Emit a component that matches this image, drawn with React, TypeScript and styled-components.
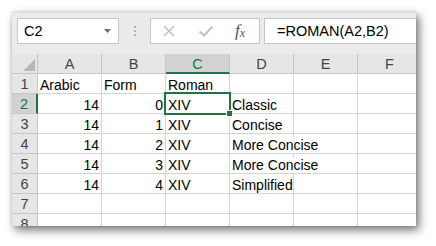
import React from "react";
import styled, { createGlobalStyle, css } from "styled-components";

const GREEN = "#217346";

const GlobalStyle = createGlobalStyle`
    html, body {
        margin: 0;
        padding: 0;
        background: #ffffff;
    }
    body {
        font-family: "Liberation Sans", Arial, sans-serif;
        font-size: 14px;
        color: #000;
    }
`;

const Page = styled.div`
    padding: 12px;
    width: 436px;
    height: 246px;
    box-sizing: border-box;
    overflow: hidden;
`;

const Window = styled.div`
    width: 404px;
    height: 214px;
    overflow: hidden;
    background: #ffffff;
    box-shadow: 3px 4px 9px rgba(0, 0, 0, 0.55), 0 0 3px rgba(0, 0, 0, 0.12);
    display: flex;
    flex-direction: column;
`;

const Toolbar = styled.div`
    height: 42px;
    flex: none;
    background: #ebebeb;
    border-top: 1px solid #dcdcdc;
    box-sizing: border-box;
    display: flex;
    align-items: flex-start;
    padding: 5px 0 0 5px;
`;

const NameBox = styled.div`
    width: 102px;
    height: 26px;
    box-sizing: border-box;
    background: #fff;
    border: 1px solid #c6c6c6;
    display: flex;
    align-items: center;
    justify-content: space-between;
    padding: 0 7px 0 6px;
    font-size: 14.5px;
`;

const Dots = styled.div`
    width: 31px;
    height: 26px;
    display: flex;
    flex-direction: column;
    align-items: center;
    justify-content: center;
    gap: 2px;

    span {
        width: 2px;
        height: 2px;
        background: #b0b0b0;
    }
`;

const ButtonBox = styled.div`
    width: 110px;
    height: 26px;
    box-sizing: border-box;
    background: #fff;
    border: 1px solid #c6c6c6;
    display: flex;
    align-items: center;
    padding-left: 11px;
`;

const ToolButton = styled.div<{ $w: number }>`
    width: ${(p) => p.$w}px;
    height: 24px;
    display: flex;
    align-items: center;
    justify-content: flex-start;
`;

const Fx = styled.span`
    font-family: "Liberation Serif", "Times New Roman", serif;
    font-style: italic;
    font-size: 17px;
    color: #555;

    sub {
        font-size: 12px;
        vertical-align: -1px;
    }
`;

const FormulaInput = styled.div`
    flex: 1;
    height: 26px;
    box-sizing: border-box;
    margin-left: 4px;
    background: #fff;
    border: 1px solid #c6c6c6;
    border-right: none;
    display: flex;
    align-items: center;
    padding-left: 12px;
    font-size: 14.5px;
`;

const Sheet = styled.div`
    display: grid;
    grid-template-columns: 26px repeat(6, 64px);
    grid-template-rows: repeat(9, 20px);
`;

const Corner = styled.div`
    background: #e6e6e6;
    border-right: 1px solid #c6c6c6;
    border-bottom: 1px solid #c6c6c6;
    box-sizing: border-box;
    display: flex;
    align-items: flex-end;
    justify-content: flex-end;
    padding: 0 2px 2px 0;
`;

const Header = styled.div<{ $selected?: boolean; $side?: boolean }>`
    background: ${(p) => (p.$selected ? "#d2d2d2" : "#e6e6e6")};
    color: ${(p) => (p.$selected ? GREEN : "#444")};
    box-sizing: border-box;
    border-right: 1px solid #c6c6c6;
    border-bottom: 1px solid #c6c6c6;
    display: flex;
    align-items: center;
    justify-content: center;
    font-size: 14.5px;
    line-height: 20px;
    padding-top: 1px;
    ${(p) =>
        p.$selected &&
        (p.$side
            ? css`border-right: 2px solid ${GREEN};`
            : css`border-bottom: 2px solid ${GREEN};`)}
`;

const Cell = styled.div<{ $align?: "left" | "right"; $active?: boolean }>`
    position: relative;
    box-sizing: border-box;
    border-right: 1px solid #d4d4d4;
    border-bottom: 1px solid #d4d4d4;
    padding: 2px 2px 0 2px;
    line-height: 18px;
    white-space: nowrap;
    text-align: ${(p) => (p.$align === "right" ? "right" : "left")};
    ${(p) =>
        p.$active &&
        css`
            z-index: 2;
            &::before {
                content: "";
                position: absolute;
                left: -2px;
                top: -2px;
                right: -2px;
                bottom: -2px;
                border: 2px solid ${GREEN};
            }
            &::after {
                content: "";
                position: absolute;
                right: -4px;
                bottom: -4px;
                width: 5px;
                height: 5px;
                background: ${GREEN};
                border: 1px solid #fff;
            }
        `}
`;

const Spill = styled.span`
    position: relative;
    z-index: 1;
    background: #fff;
`;

type Row = { a?: number | string; b?: number | string; c?: string; d?: string };

const columns = ["A", "B", "C", "D", "E", "F"];

const rows: Row[] = [
    { a: "Arabic", b: "Form", c: "Roman" },
    { a: 14, b: 0, c: "XIV", d: "Classic" },
    { a: 14, b: 1, c: "XIV", d: "Concise" },
    { a: 14, b: 2, c: "XIV", d: "More Concise" },
    { a: 14, b: 3, c: "XIV", d: "More Concise" },
    { a: 14, b: 4, c: "XIV", d: "Simplified" },
    {},
    {},
];

const align = (v: unknown) => (typeof v === "number" ? "right" : "left");

const CrossIcon = () => (
    <svg width="14" height="14" viewBox="0 0 14 14">
        <path d="M2 2 L12 12 M12 2 L2 12" stroke="#c2c2c2" strokeWidth="1.6" fill="none" />
    </svg>
);

const CheckIcon = () => (
    <svg width="16" height="14" viewBox="0 0 16 14">
        <path d="M1.5 7.5 L6 11.5 L14.5 2.5" stroke="#c2c2c2" strokeWidth="2" fill="none" />
    </svg>
);

export default function App() {
    return (
        <>
            <GlobalStyle />
            <Page>
                <Window>
                    <Toolbar>
                        <NameBox>
                            <span>C2</span>
                            <svg width="7" height="4" viewBox="0 0 7 4">
                                <path d="M0 0 H7 L3.5 4 Z" fill="#707070" />
                            </svg>
                        </NameBox>
                        <Dots>
                            <span />
                            <span />
                            <span />
                        </Dots>
                        <ButtonBox>
                            <ToolButton $w={36}>
                                <CrossIcon />
                            </ToolButton>
                            <ToolButton $w={37}>
                                <CheckIcon />
                            </ToolButton>
                            <ToolButton $w={24}>
                                <Fx>
                                    f<sub>x</sub>
                                </Fx>
                            </ToolButton>
                        </ButtonBox>
                        <FormulaInput>=ROMAN(A2,B2)</FormulaInput>
                    </Toolbar>
                    <Sheet>
                        <Corner>
                            <svg width="12" height="12" viewBox="0 0 12 12">
                                <path d="M12 0 V12 H0 Z" fill="#b7b7b7" />
                            </svg>
                        </Corner>
                        {columns.map((c) => (
                            <Header key={c} $selected={c === "C"}>
                                {c}
                            </Header>
                        ))}
                        {rows.map((r, i) => (
                            <React.Fragment key={i}>
                                <Header $side $selected={i === 1}>
                                    {i + 1}
                                </Header>
                                <Cell $align={align(r.a)}>{r.a}</Cell>
                                <Cell $align={align(r.b)}>{r.b}</Cell>
                                <Cell $align={align(r.c)} $active={i === 1}>
                                    {r.c}
                                </Cell>
                                <Cell>{r.d && <Spill>{r.d}</Spill>}</Cell>
                                <Cell />
                                <Cell />
                            </React.Fragment>
                        ))}
                    </Sheet>
                </Window>
            </Page>
        </>
    );
}
